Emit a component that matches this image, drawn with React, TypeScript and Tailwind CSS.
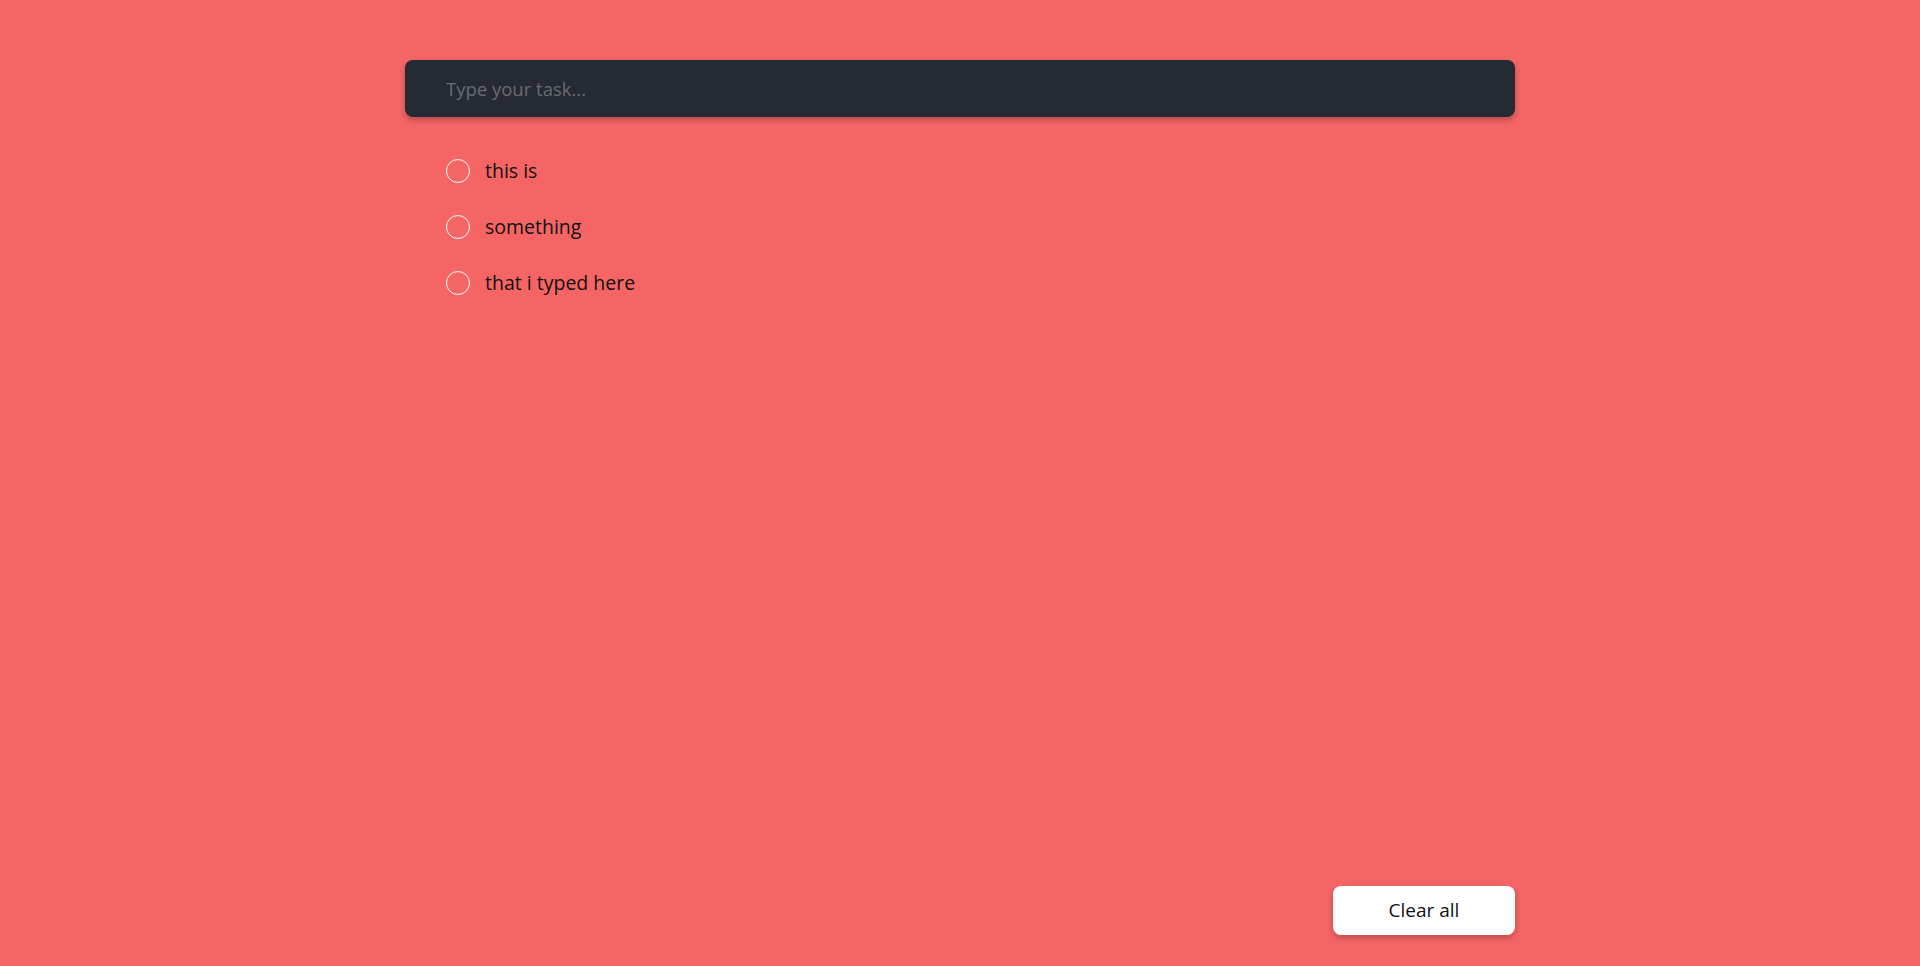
import { useState } from 'react'

const FONT = "font-['Open_Sans',_'Liberation_Sans',_sans-serif]"

export default function App() {
  const [items] = useState(['this is', 'something', 'that i typed here'])
  return (
    <div className={`flex min-h-screen flex-col bg-[#f56565] ${FONT}`}>
      <div className="mx-auto flex w-[1110px] flex-1 flex-col pt-[60px] pb-[31px]">
        <input
          className="h-[57px] w-full rounded-lg bg-[#262a33] px-[41px] text-[18.5px] text-white shadow-[0_3px_6px_rgba(0,0,0,0.25)] outline-none placeholder:text-[#686c72]"
          placeholder="Type your task..."
        />
        <ul className="mt-[42px] flex flex-col gap-[32px] pl-[41px]">
          {items.map(t => (
            <li key={t} className="flex h-[24px] items-center gap-[15px]">
              <span className="h-6 w-6 shrink-0 rounded-full border border-white" />
              <span className="text-[19.5px] text-[#111]">{t}</span>
            </li>
          ))}
        </ul>
        <div className="mt-auto flex justify-end">
          <button className="h-[49px] w-[182px] rounded-lg bg-white text-[19px] text-[#111] shadow-[0_3px_6px_rgba(0,0,0,0.25)]">
            Clear all
          </button>
        </div>
      </div>
    </div>
  )
}
